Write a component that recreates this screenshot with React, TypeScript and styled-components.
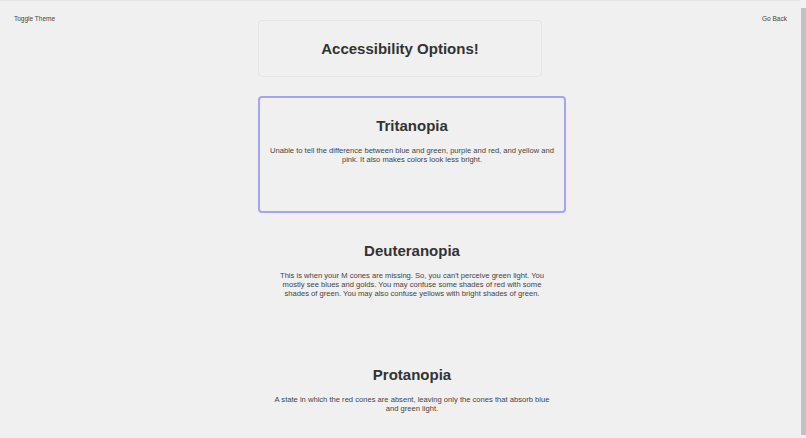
import styled, { createGlobalStyle } from 'styled-components'

const GlobalStyle = createGlobalStyle`
  html, body {
    margin: 0;
    padding: 0;
    background: #f0f0f0;
    overflow: hidden;
  }
  body {
    font-family: "Liberation Sans", Arial, sans-serif;
    color: #333;
    border-top: 1px solid #e3e3e3;
  }
`

const Page = styled.div`
  display: grid;
  grid-template-columns: 1fr 284px 1fr;
  width: 800px;
  padding: 19px 0 0;
  min-height: 460px;
`

// stand-in for the browser's thin scrollbar at the right edge
const ScrollTrack = styled.div`
  position: fixed;
  top: 0;
  right: 0;
  width: 6px;
  height: 100%;
  background: #f1f1f1;
  display: flex;
  flex-direction: column;
  align-items: center;
  padding-top: 8px;
  box-sizing: border-box;
`

const ScrollThumb = styled.div`
  width: 5px;
  height: 427px;
  background: #c1c1c1;
`

const NavButton = styled.button<{ $align: 'left' | 'right' }>`
  justify-self: ${(p) => (p.$align === 'left' ? 'start' : 'end')};
  align-self: start;
  margin: -5px ${(p) => (p.$align === 'right' ? '13px' : '0')} 0 ${(p) => (p.$align === 'left' ? '14px' : '0')};
  padding: 0;
  background: none;
  border: none;
  font-family: "Liberation Sans", Arial, sans-serif;
  font-size: 6.5px;
  color: #444;
  cursor: pointer;
`

const Main = styled.main`
  display: flex;
  flex-direction: column;
  align-items: flex-start;
`

const Header = styled.div`
  box-sizing: border-box;
  width: 284px;
  height: 57px;
  border: 1px solid #e5e5e5;
  border-radius: 4px;
  display: flex;
  align-items: center;
  justify-content: center;
  margin-bottom: 19px;
`

const Title = styled.h1`
  margin: 0;
  font-size: 15px;
  font-weight: 700;
  color: #333;
`

const Card = styled.section<{ $active?: boolean }>`
  box-sizing: border-box;
  width: 308px;
  height: 117px;
  margin-bottom: 7.5px;
  padding: 19px 9.5px 0;
  border: 2px solid ${(p) => (p.$active ? '#a4a4f0' : 'transparent')};
  border-radius: 4px;
  text-align: center;
`

const CardTitle = styled.h2`
  margin: 0 0 12px;
  font-size: 15px;
  line-height: 17px;
  font-weight: 700;
  color: #333;
`

const CardText = styled.p`
  margin: 0;
  font-size: 7.6px;
  line-height: 9px;
  color: #444;
`

const options = [
  {
    name: 'Tritanopia',
    text: 'Unable to tell the difference between blue and green, purple and red, and yellow and pink. It also makes colors look less bright.',
  },
  {
    name: 'Deuteranopia',
    text: "This is when your M cones are missing. So, you can't perceive green light. You mostly see blues and golds. You may confuse some shades of red with some shades of green. You may also confuse yellows with bright shades of green.",
  },
  {
    name: 'Protanopia',
    text: 'A state in which the red cones are absent, leaving only the cones that absorb blue and green light.',
  },
]

export default function App() {
  return (
    <>
      <GlobalStyle />
      <Page>
        <NavButton $align="left">Toggle Theme</NavButton>
        <Main>
          <Header>
            <Title>Accessibility Options!</Title>
          </Header>
          {options.map((o, i) => (
            <Card key={o.name} $active={i === 0}>
              <CardTitle>{o.name}</CardTitle>
              <CardText>{o.text}</CardText>
            </Card>
          ))}
        </Main>
        <NavButton $align="right">Go Back</NavButton>
      </Page>
      <ScrollTrack>
        <ScrollThumb />
      </ScrollTrack>
    </>
  )
}
